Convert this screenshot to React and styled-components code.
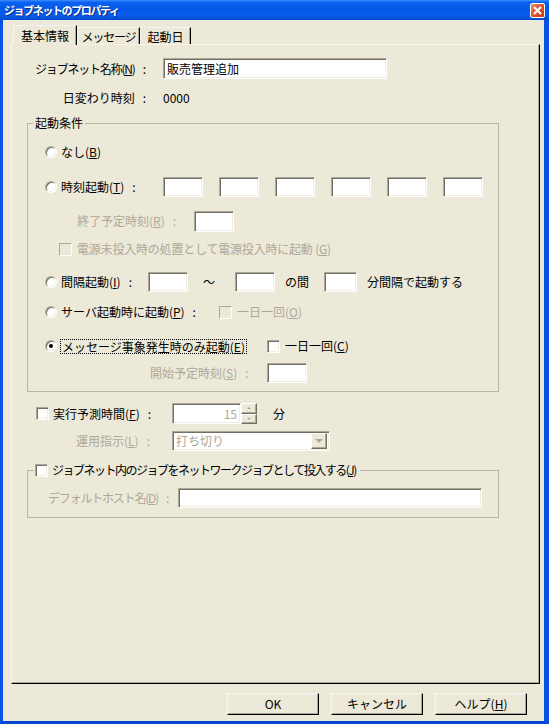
import React from "react";
import styled, { createGlobalStyle, css } from "styled-components";

const GlobalStyle = createGlobalStyle`
  html, body {
    margin: 0;
    padding: 0;
    background: #ECE9D8;
  }
  body {
    font-family: "Noto Sans CJK JP", "Noto Sans", sans-serif;
    font-size: 12px;
    line-height: 14px;
    color: #000;
  }
`;

// shared 3D edges
const sunken = css`
  border: 1px solid;
  border-color: #ACA899 #fff #fff #ACA899;
  box-shadow: inset 1px 1px 0 #716F64, inset -1px -1px 0 #F1EFE2;
`;

const raised = css`
  border: 1px solid;
  border-color: #fff #716F64 #716F64 #fff;
  box-shadow: inset -1px -1px 0 #ACA899;
  background: #ECE9D8;
`;

const Window = styled.div`
  width: 549px;
  height: 724px;
  display: flex;
  flex-direction: column;
  background: #ECE9D8;
  overflow: hidden;
`;

const TitleBar = styled.div`
  height: 20px;
  flex: none;
  display: flex;
  align-items: center;
  justify-content: space-between;
  padding: 0 4px 0 4px;
  background: linear-gradient(#3A8CFF 0%, #0A62F0 12%, #0558E8 45%, #0A5CEC 80%, #0347C8 100%);
`;

const TitleText = styled.span`
  color: #fff;
  font-weight: 700;
  font-size: 11px;
  letter-spacing: -1.4px;
  text-shadow: 1px 1px 0 #0A2E8C;
`;

const CloseButton = styled.div`
  width: 13px;
  height: 13px;
  display: flex;
  align-items: center;
  justify-content: center;
  border: 1px solid #fff;
  border-radius: 2px;
  background: linear-gradient(135deg, #F08A6A 0%, #E0532C 50%, #C23A14 100%);
`;

const Body = styled.div`
  flex: 1;
  display: flex;
  flex-direction: column;
  padding: 5px 4px 6px 8px;
  border-left: 3px solid #0852E6;
  border-right: 5px solid #0852E6;
  border-bottom: 3px solid #0847D0;
`;

const TabRow = styled.div`
  display: flex;
  align-items: flex-end;
  height: 20px;
  margin-bottom: -1px;
  padding-left: 2px;
`;

const Tab = styled.div`
  width: ${(p) => p.$w}px;
  height: ${(p) => (p.$active ? 20 : 17)}px;
  margin-bottom: ${(p) => (p.$active ? 0 : 1)}px;
  box-sizing: border-box;
  display: flex;
  align-items: center;
  justify-content: center;
  padding-top: ${(p) => (p.$active ? 0 : 1)}px;
  letter-spacing: ${(p) => p.$ls || 0}px;
  border-top: 1px dotted #fff;
  border-left: 1px dotted #fff;
  border-right: 1px solid #000;
  box-shadow: inset -1px 0 0 #ACA899;
  background: #ECE9D8;
  position: relative;
  z-index: ${(p) => (p.$active ? 1 : 0)};
`;

const Panel = styled.div`
  height: 640px;
  box-sizing: border-box;
  padding: 0 15px;
  border-top: 1px dotted #fff;
  border-left: 1px dotted #fff;
  border-right: 1px solid #000;
  border-bottom: 1px solid #000;
  box-shadow: inset -1px -1px 0 #ACA899;
`;

const Row = styled.div`
  display: flex;
  align-items: center;
  height: ${(p) => p.$h || 22}px;
  margin-top: ${(p) => p.$mt || 0}px;
  margin-left: ${(p) => p.$ml || 0}px;
`;

const Text = styled.span`
  flex: none;
  white-space: nowrap;
  margin-left: ${(p) => p.$ml || 0}px;
  width: ${(p) => (p.$w ? `${p.$w}px` : "auto")};
  text-align: ${(p) => (p.$right ? "right" : "left")};
  letter-spacing: ${(p) => p.$ls || 0}px;
  color: ${(p) => (p.$dim ? "#ACA899" : "#000")};
`;

const Colon = styled.span`
  margin-left: 8px;
  margin-right: ${(p) => p.$mr || 0}px;
  letter-spacing: 0;
`;

const Key = styled.u`
  text-underline-offset: 1px;
`;

const TextBox = styled.div`
  ${sunken};
  flex: none;
  box-sizing: border-box;
  width: ${(p) => p.$w}px;
  height: ${(p) => p.$h || 20}px;
  margin-left: ${(p) => p.$ml || 0}px;
  padding: 2px 3px 0;
  background: #fff;
  font-size: 12px;
  line-height: 16px;
  color: ${(p) => (p.$dim ? "#ACA899" : "#000")};
  text-align: ${(p) => (p.$right ? "right" : "left")};
`;

const Radio = styled.span`
  ${sunken};
  flex: none;
  width: 12px;
  height: 12px;
  box-sizing: border-box;
  border-radius: 50%;
  background: #fff;
  margin-left: ${(p) => p.$ml || 0}px;
  display: flex;
  align-items: center;
  justify-content: center;
  &::after {
    content: "";
    width: 4px;
    height: 4px;
    border-radius: 50%;
    background: ${(p) => (p.$checked ? "#000" : "transparent")};
  }
`;

const CheckBox = styled.span`
  ${sunken};
  flex: none;
  width: 13px;
  height: 13px;
  box-sizing: border-box;
  margin-left: ${(p) => p.$ml || 0}px;
  background: ${(p) => (p.$dim ? "#ECE9D8" : "#fff")};
  ${(p) =>
    p.$dim &&
    css`
      box-shadow: none;
    `}
`;

const FocusLabel = styled.span`
  flex: none;
  white-space: nowrap;
  margin-left: ${(p) => p.$ml || 0}px;
  padding: 0 1px;
  border: 1px dotted #000;
  line-height: 13px;
`;

const Group = styled.fieldset`
  margin: ${(p) => p.$mt || 0}px 0 0 0;
  padding: 0;
  min-inline-size: 0;
  width: 472px;
  box-sizing: border-box;
  border: 1px solid #B9B6A3;
`;

const Legend = styled.legend`
  display: flex;
  align-items: center;
  height: 14px;
  margin-left: ${(p) => p.$ml || 0}px;
  padding: 0 ${(p) => p.$pr ?? 2}px 0 ${(p) => p.$pl ?? 2}px;
  line-height: 14px;
`;

const GroupBody = styled.div`
  padding-top: ${(p) => p.$pt}px;
  padding-bottom: ${(p) => p.$pb}px;
`;

const Spin = styled.div`
  display: flex;
  flex-direction: column;
  width: 16px;
  height: 21px;
`;

const SpinButton = styled.div`
  ${raised};
  flex: 1;
  box-sizing: border-box;
  display: flex;
  align-items: center;
  justify-content: center;
  &::after {
    content: "";
    border-left: 2px solid transparent;
    border-right: 2px solid transparent;
    ${(p) =>
      p.$down
        ? css`border-top: 2px solid #ACA899;`
        : css`border-bottom: 2px solid #ACA899;`}
  }
`;

const Combo = styled.div`
  ${sunken};
  flex: none;
  box-sizing: border-box;
  width: ${(p) => p.$w}px;
  height: 20px;
  margin-left: ${(p) => p.$ml || 0}px;
  background: #fff;
  display: flex;
  align-items: center;
  justify-content: space-between;
  padding: 0 2px 0 3px;
  color: #ACA899;
`;

const DropButton = styled.div`
  ${raised};
  width: 16px;
  height: 16px;
  box-sizing: border-box;
  display: flex;
  align-items: center;
  justify-content: center;
  &::after {
    content: "";
    border-left: 4px solid transparent;
    border-right: 4px solid transparent;
    border-top: 4px solid #ACA899;
  }
`;

const ButtonRow = styled.div`
  display: flex;
  justify-content: flex-end;
  gap: 12px;
  margin-top: 9px;
  padding-right: 13px;
`;

const Button = styled.div`
  width: 92px;
  height: 22px;
  box-sizing: border-box;
  display: flex;
  align-items: center;
  justify-content: center;
  border-top: 1px dotted #fff;
  border-left: 1px dotted #fff;
  border-right: 1px solid #000;
  border-bottom: 1px solid #000;
  box-shadow: inset -1px -1px 0 #ACA899;
  background: #ECE9D8;
`;

const timeBoxes = [0, 1, 2, 3, 4, 5];

export default function App() {
  return (
    <>
      <GlobalStyle />
      <Window>
        <TitleBar>
          <TitleText>ジョブネットのプロパティ</TitleText>
          <CloseButton>
            <svg width="9" height="9" viewBox="0 0 9 9">
              <path d="M1 1L8 8M8 1L1 8" stroke="#fff" strokeWidth="2" />
            </svg>
          </CloseButton>
        </TitleBar>
        <Body>
          <TabRow>
            <Tab $active $w={64}>基本情報</Tab>
            <Tab $w={63} $ls={-1.2}>メッセージ</Tab>
            <Tab $w={51}>起動日</Tab>
          </TabRow>
          <Panel>
            <Row $mt={13} $h={21}>
              <Text $w={123} $right $ls={-1.2}>
                ジョブネット名称(<Key>N</Key>)<Colon $mr={4}>:</Colon>
              </Text>
              <TextBox $ml={13} $w={224} $h={21}>販売管理追加</TextBox>
            </Row>
            <Row $mt={12} $h={14}>
              <Text $w={123} $right>
                日変わり時刻<Colon $mr={4}>:</Colon>
              </Text>
              <Text $ml={13}>0000</Text>
            </Row>

            <Group $mt={11}>
              <Legend $ml={5}>起動条件</Legend>
              <GroupBody $pt={11} $pb={7}>
                <Row>
                  <Radio $ml={17} />
                  <Text $ml={4}>なし(<Key>B</Key>)</Text>
                </Row>
                <Row $mt={13}>
                  <Radio $ml={17} />
                  <Text $ml={4} $w={102}>
                    時刻起動(<Key>T</Key>)<Colon>:</Colon>
                  </Text>
                  {timeBoxes.map((i) => (
                    <TextBox key={i} $w={40} $ml={i === 0 ? 0 : 16} />
                  ))}
                </Row>
                <Row $mt={12}>
                  <Text $ml={49} $w={117} $dim>
                    終了予定時刻(<Key>R</Key>)<Colon>:</Colon>
                  </Text>
                  <TextBox $w={40} $h={21} />
                </Row>
                <Row $mt={6}>
                  <CheckBox $ml={31} $dim />
                  <Text $ml={5} $dim $ls={-0.2}>
                    電源未投入時の処置として電源投入時に起動 (<Key>G</Key>)
                  </Text>
                </Row>
                <Row $mt={11}>
                  <Radio $ml={17} />
                  <Text $ml={4} $w={87}>
                    間隔起動(<Key>I</Key>)<Colon>:</Colon>
                  </Text>
                  <TextBox $w={40} />
                  <Text $ml={15} $w={32}>～</Text>
                  <TextBox $w={40} />
                  <Text $ml={10} $w={39}>の間</Text>
                  <TextBox $w={33} />
                  <Text $ml={10}>分間隔で起動する</Text>
                </Row>
                <Row $mt={8}>
                  <Radio $ml={17} />
                  <Text $ml={4} $w={158}>
                    サーバ起動時に起動(<Key>P</Key>)<Colon>:</Colon>
                  </Text>
                  <CheckBox $dim />
                  <Text $ml={5} $dim>
                    一日一回(<Key>O</Key>)
                  </Text>
                </Row>
                <Row $mt={12}>
                  <Radio $ml={17} $checked />
                  <FocusLabel $ml={3}>
                    メッセージ事象発生時のみ起動(<Key>E</Key>)
                  </FocusLabel>
                  <CheckBox $ml={20} />
                  <Text $ml={5}>
                    一日一回(<Key>C</Key>)
                  </Text>
                </Row>
                <Row $mt={5}>
                  <Text $ml={122} $w={117} $dim>
                    開始予定時刻(<Key>S</Key>)<Colon>:</Colon>
                  </Text>
                  <TextBox $w={40} />
                </Row>
              </GroupBody>
            </Group>

            <Row $mt={11} $h={21}>
              <CheckBox $ml={9} />
              <Text $ml={4} $w={119}>
                実行予測時間(<Key>F</Key>)<Colon>:</Colon>
              </Text>
              <TextBox $w={69} $h={21} $dim $right>
                15
              </TextBox>
              <Spin>
                <SpinButton />
                <SpinButton $down />
              </Spin>
              <Text $ml={16}>分</Text>
            </Row>
            <Row $mt={7} $h={20}>
              <Text $ml={49} $w={96} $dim>
                運用指示(<Key>L</Key>)<Colon>:</Colon>
              </Text>
              <Combo $w={158}>
                打ち切り
                <DropButton />
              </Combo>
            </Row>

            <Group $mt={12}>
              <Legend $ml={6} $pl={1} $pr={4}>
                <CheckBox />
                <Text $ml={4} $ls={-1.5}>
                  ジョブネット内のジョブをネットワークジョブとして投入する(<Key>J</Key>)
                </Text>
              </Legend>
              <GroupBody $pt={11} $pb={9}>
                <Row $h={20}>
                  <Text $ml={20} $w={130} $dim $ls={-1.2}>
                    デフォルトホスト名(<Key>D</Key>)<Colon>:</Colon>
                  </Text>
                  <TextBox $w={304} />
                </Row>
              </GroupBody>
            </Group>
          </Panel>
          <ButtonRow>
            <Button>OK</Button>
            <Button>キャンセル</Button>
            <Button>
              ヘルプ(<Key>H</Key>)
            </Button>
          </ButtonRow>
        </Body>
      </Window>
    </>
  );
}
